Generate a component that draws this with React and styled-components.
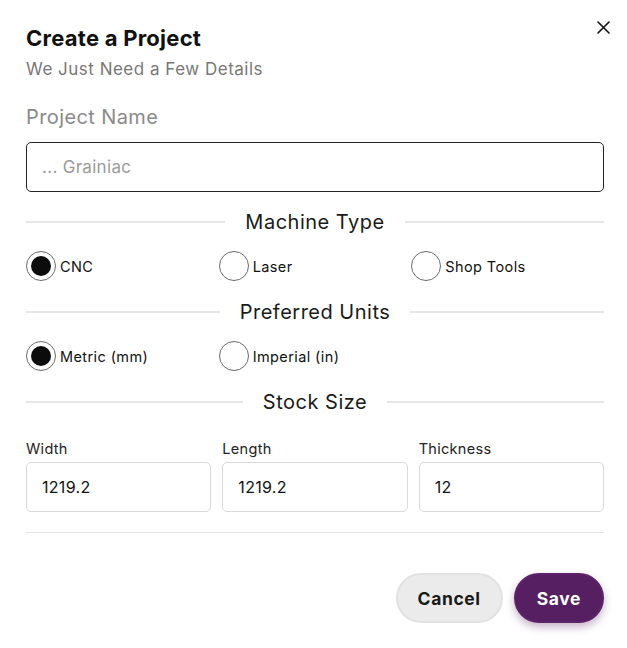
import React, { useState } from 'react'
import styled, { createGlobalStyle } from 'styled-components'

const GlobalStyle = createGlobalStyle`
  body {
    margin: 0;
    background: #fff;
    font-family: "Inter", "Open Sans", "Liberation Sans", sans-serif;
    color: #111;
  }
  * { box-sizing: border-box; }
`

function App() {
  const [machine, setMachine] = useState('cnc')
  const [units, setUnits] = useState('metric')

  return (
    <>
      <GlobalStyle />
      <StyledModal>
        <CloseButton aria-label="Close">
          <svg width="13" height="13" viewBox="0 0 13 13">
            <path d="M1 1 L12 12 M12 1 L1 12" stroke="#111" strokeWidth="1.6" strokeLinecap="round" />
          </svg>
        </CloseButton>
        <Title>Create a Project</Title>
        <Subtitle>We Just Need a Few Details</Subtitle>

        <BigLabel>Project Name</BigLabel>
        <NameInput placeholder="... Grainiac" />

        <Divider>Machine Type</Divider>
        <RadioRow>
          <Radio label="CNC" checked={machine === 'cnc'} onClick={() => setMachine('cnc')} />
          <Radio label="Laser" checked={machine === 'laser'} onClick={() => setMachine('laser')} />
          <Radio label="Shop Tools" checked={machine === 'shop'} onClick={() => setMachine('shop')} />
        </RadioRow>

        <Divider>Preferred Units</Divider>
        <RadioRow>
          <Radio label="Metric (mm)" checked={units === 'metric'} onClick={() => setUnits('metric')} />
          <Radio label="Imperial (in)" checked={units === 'imperial'} onClick={() => setUnits('imperial')} />
        </RadioRow>

        <Divider>Stock Size</Divider>
        <StockGrid>
          <Field>
            <SmallLabel>Width</SmallLabel>
            <StockInput defaultValue="1219.2" />
          </Field>
          <Field>
            <SmallLabel>Length</SmallLabel>
            <StockInput defaultValue="1219.2" />
          </Field>
          <Field>
            <SmallLabel>Thickness</SmallLabel>
            <StockInput defaultValue="12" />
          </Field>
        </StockGrid>

        <Rule />

        <Actions>
          <Button>Cancel</Button>
          <Button primary>Save</Button>
        </Actions>
      </StyledModal>
    </>
  )
}

function Radio({ label, checked, onClick }) {
  return (
    <RadioOption onClick={onClick}>
      <RadioCircle checked={checked} />
      <span>{label}</span>
    </RadioOption>
  )
}

function Divider({ children }) {
  return (
    <DividerRow>
      <DividerLine />
      <DividerText>{children}</DividerText>
      <DividerLine />
    </DividerRow>
  )
}

export default App

const StyledModal = styled.section`
  position: relative;
  width: 578px;
  margin-left: 26px;
  padding-top: 24px;
  padding-bottom: 26px;
  display: flex;
  flex-direction: column;
`

const CloseButton = styled.button`
  position: absolute;
  top: 15px;
  right: -11px;
  width: 24px;
  height: 24px;
  border: none;
  background: none;
  padding: 0;
  display: flex;
  align-items: center;
  justify-content: center;
  cursor: pointer;
`

const Title = styled.h1`
  margin: 0;
  font-size: 22px;
  line-height: 28px;
  font-weight: 700;
  letter-spacing: 0.25px;
  color: #111;
`

const Subtitle = styled.p`
  margin: 6px 0 0;
  font-size: 17px;
  line-height: 22px;
  letter-spacing: 0.5px;
  color: #777;
`

const BigLabel = styled.label`
  margin-top: 24px;
  font-size: 20px;
  line-height: 26px;
  letter-spacing: 0.4px;
  color: #8a8a8a;
`

const NameInput = styled.input`
  margin-top: 12px;
  height: 50px;
  width: 100%;
  border: 1px solid #222;
  border-radius: 5px;
  padding: 0 15px;
  font-family: inherit;
  font-size: 17px;
  letter-spacing: 0.3px;
  color: #111;
  outline: none;
  &::placeholder {
    color: #9a9a9a;
  }
`

const DividerRow = styled.div`
  display: flex;
  align-items: center;
  gap: 20px;
  margin-top: 17px;
  height: 26px;
`

const DividerLine = styled.div`
  flex: 1;
  height: 2px;
  background: #e6e6e6;
`

const DividerText = styled.span`
  font-size: 20px;
  line-height: 26px;
  letter-spacing: 0.5px;
  color: #1a1a1a;
`

const RadioRow = styled.div`
  display: grid;
  grid-template-columns: repeat(3, 1fr);
  height: 30px;
  margin-top: 16px;
  margin-bottom: 1px;
`

const RadioOption = styled.label`
  display: flex;
  align-items: center;
  gap: 4px;
  font-size: 14.5px;
  letter-spacing: 0.4px;
  color: #111;
  cursor: pointer;
`

const RadioCircle = styled.span`
  width: 30px;
  height: 30px;
  border-radius: 50%;
  border: 1px solid #6a6a6a;
  display: flex;
  align-items: center;
  justify-content: center;
  flex-shrink: 0;
  &::after {
    content: '';
    width: 20px;
    height: 20px;
    border-radius: 50%;
    background: #0c0c0c;
    display: ${p => (p.checked ? 'block' : 'none')};
  }
`

const StockGrid = styled.div`
  display: grid;
  grid-template-columns: repeat(3, 1fr);
  gap: 11px;
  margin-top: 24px;
`

const Field = styled.div`
  display: flex;
  flex-direction: column;
`

const SmallLabel = styled.label`
  font-size: 14.5px;
  line-height: 20px;
  letter-spacing: 0.3px;
  color: #222;
`

const StockInput = styled.input`
  margin-top: 3px;
  height: 50px;
  width: 100%;
  border: 1px solid #d9d9d9;
  border-radius: 5px;
  padding: 0 15px;
  font-family: inherit;
  font-size: 16px;
  letter-spacing: 0.3px;
  color: #111;
  outline: none;
`

const Rule = styled.div`
  margin-top: 20px;
  height: 1px;
  background: #e3e3e3;
`

const Actions = styled.div`
  display: flex;
  justify-content: flex-end;
  gap: 11px;
  margin-top: 40px;
`

const Button = styled.button`
  height: 50px;
  padding: 0 ${p => (p.primary ? '21px' : '20px')};
  border-radius: 25px;
  font-family: inherit;
  font-size: 17.5px;
  font-weight: 700;
  letter-spacing: 0.6px;
  cursor: pointer;
  border: 2px solid ${p => (p.primary ? '#5c2468' : '#e2e2e2')};
  background: ${p => (p.primary ? '#561f62' : '#ebebeb')};
  color: ${p => (p.primary ? '#fff' : '#1a1a1a')};
  box-shadow: ${p => (p.primary ? '0 4px 8px rgba(86, 31, 98, 0.35)' : 'none')};
`
